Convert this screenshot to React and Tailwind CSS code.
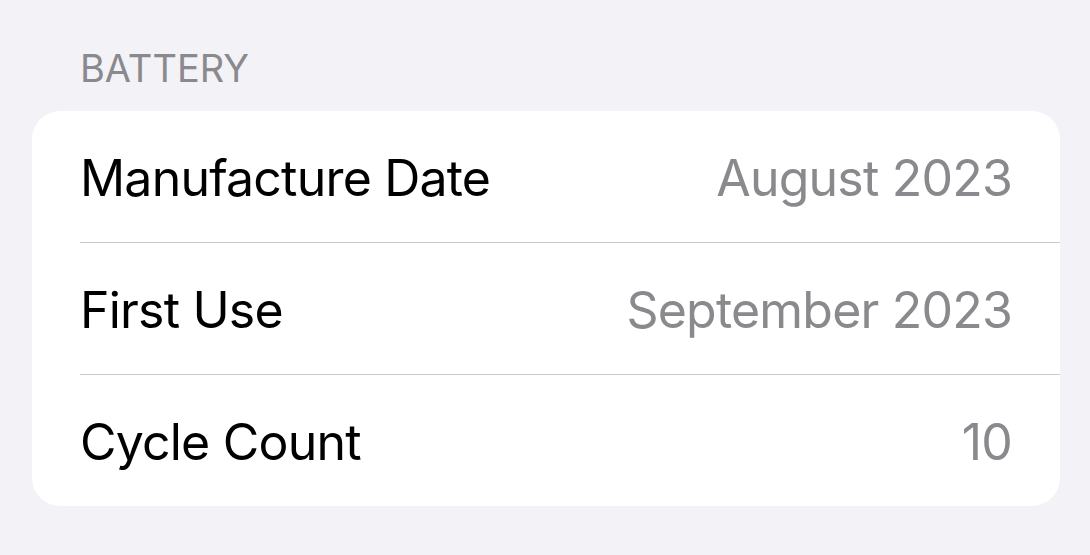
export default function App() {
  const rows = [
    ["Manufacture Date", "August 2023"],
    ["First Use", "September 2023"],
    ["Cycle Count", "10"],
  ];
  return (
    <div className="w-[1090px] h-[555px] bg-[#f2f2f7] pl-[32px] pr-[30px] pt-[49px] overflow-hidden" style={{ fontFamily: "Inter, 'Noto Sans', sans-serif" }}>
      <div className="pl-[48px] h-[62px] text-[38px] leading-[38px] text-[#8a8a8e]">BATTERY</div>
      <div className="bg-white rounded-[28px] w-[1028px] flex flex-col">
        {rows.map(([k, v], i) => (
          <div key={k} className="flex flex-col">
            {i > 0 && <div className="ml-[48px] h-px bg-[#c8c8cc]" />}
            <div className="h-[131px] flex items-center justify-between pl-[48px] pr-[48px] pt-[4px] text-[50px] tracking-[-0.8px]">
              <span className="text-black">{k}</span>
              <span className="text-[#8a8a8e]">{v}</span>
            </div>
          </div>
        ))}
      </div>
    </div>
  );
}
